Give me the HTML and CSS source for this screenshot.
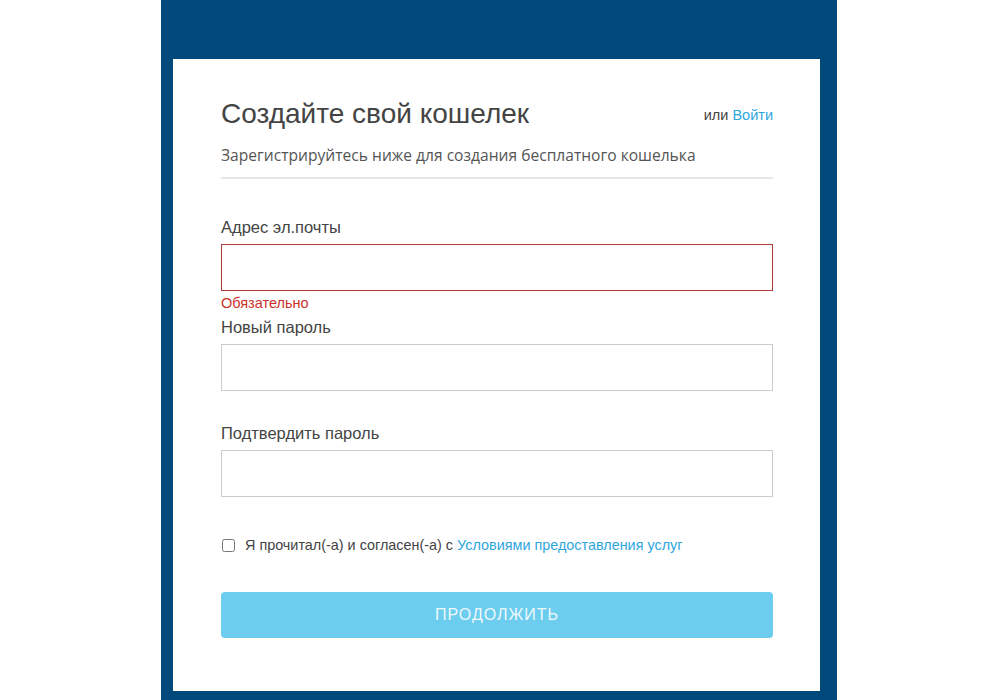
FILE: index.html
```
<!DOCTYPE html>
<html lang="ru">
  <head>
    <meta charset="UTF-8" />
    <meta name="viewport" content="width=device-width, initial-scale=1.0" />
    <title>Создайте свой кошелек</title>
    <link rel="stylesheet" href="styles.css">
  </head>
  <body>
    <div class="page">
      <div class="card">
        <div class="card-head">
          <h1>Создайте свой кошелек</h1>
          <div class="login-link">или <a href="#">Войти</a></div>
        </div>
        <p class="subtitle">Зарегистрируйтесь ниже для создания бесплатного кошелька</p>

        <form class="signup-form" onsubmit="return false;">
          <div class="field has-error">
            <label for="email">Адрес эл.почты</label>
            <input type="email" id="email" />
            <div class="error-text">Обязательно</div>
          </div>

          <div class="field">
            <label for="password">Новый пароль</label>
            <input type="password" id="password" />
          </div>

          <div class="field">
            <label for="confirm">Подтвердить пароль</label>
            <input type="password" id="confirm" />
          </div>

          <label class="terms">
            <input type="checkbox" />
            <span>Я прочитал(-а) и согласен(-а) с <a href="#">Условиями предоставления услуг</a></span>
          </label>

          <button type="submit" class="submit-btn">ПРОДОЛЖИТЬ</button>
        </form>
      </div>
    </div>
  </body>
</html>
```

FILE: styles.css
```
body {
  font-family: "Liberation Sans", Arial, sans-serif;
  background-color: white;
  color: #444;
  margin: 0;
  padding: 0;
}

.page {
  width: 676px;
  height: 700px;
  margin-left: 161px;
  background: #004a7b;
  padding: 59px 17px 9px 12px;
  box-sizing: border-box;
}

.card {
  background: white;
  height: 100%;
  padding: 39px 47px 0 48px;
  box-sizing: border-box;
}

.card-head {
  display: flex;
  justify-content: space-between;
  align-items: center;
}

.card-head h1 {
  margin: 0;
  font-size: 28px;
  line-height: 32px;
  font-weight: normal;
  color: #444;
}

.login-link {
  font-size: 14.5px;
  color: #444;
  padding-top: 2px;
}

a {
  color: #2ea7dd;
  text-decoration: none;
}

.subtitle {
  margin: 15px 0 0;
  font-family: "Open Sans", "Noto Sans", sans-serif;
  font-size: 15.6px;
  line-height: 20px;
  color: #555;
  padding-bottom: 12px;
  border-bottom: 2px solid #e6e6e6;
}

.signup-form {
  padding-top: 38px;
}

.field {
  margin-bottom: 32px;
}

.field.has-error {
  margin-bottom: 6px;
}

.field label {
  display: block;
  font-size: 16.5px;
  line-height: 20px;
  margin-bottom: 7px;
  color: #444;
}

.field input {
  display: block;
  width: 100%;
  height: 47px;
  box-sizing: border-box;
  border: 1px solid #ccc;
  padding: 0 12px;
  font-size: 16px;
  outline: none;
}

.field.has-error input {
  border-color: #b33a3a;
}

.error-text {
  margin-top: 4px;
  font-size: 14.5px;
  line-height: 16px;
  color: #c9302c;
}

.terms {
  display: flex;
  align-items: center;
  font-size: 14.4px;
  line-height: 18px;
  color: #444;
  margin-top: 39px;
}

.terms input {
  width: 13px;
  height: 13px;
  margin: 0 10px 0 1px;
}

.submit-btn {
  display: block;
  width: 100%;
  height: 46px;
  margin-top: 38px;
  background-color: #6ccdee;
  color: #eef9fd;
  border: none;
  border-radius: 4px;
  font-family: "Liberation Sans", Arial, sans-serif;
  font-size: 16px;
  letter-spacing: 1px;
  cursor: pointer;
}
```
